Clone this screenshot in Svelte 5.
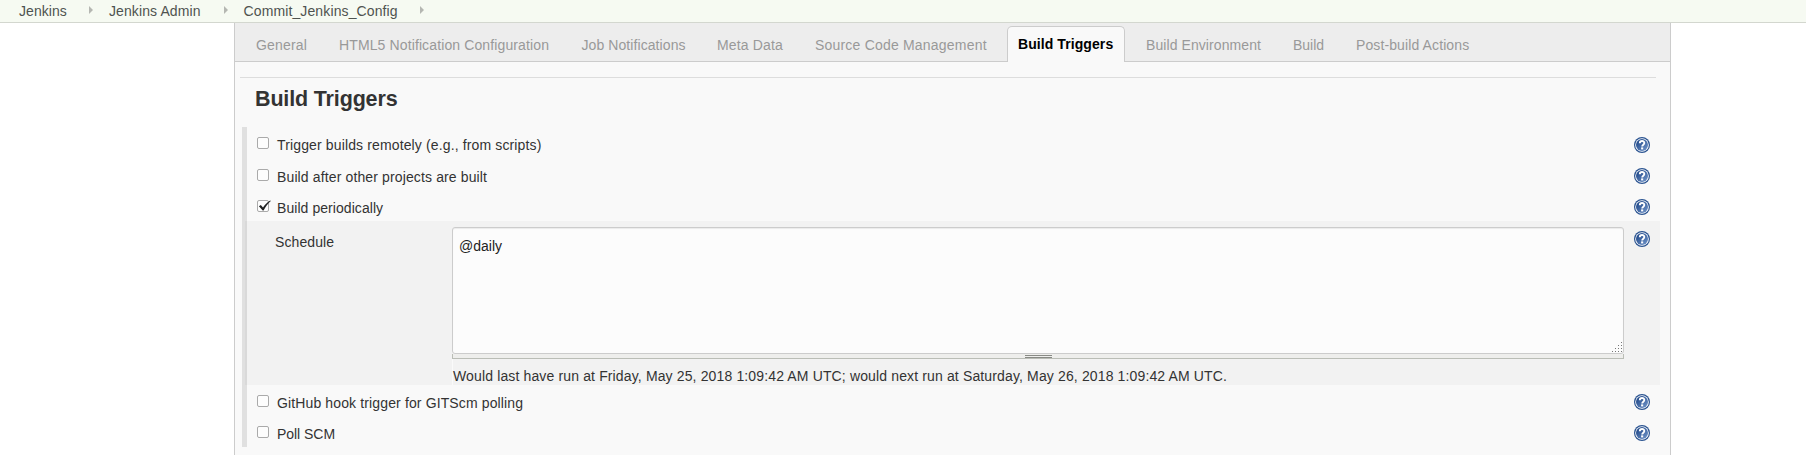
<script>
  // Each entry: text, advance width in px, letter spacing in px
  const crumbs = [
    ['Jenkins', 48, 0.06],
    ['Jenkins Admin', 92.5, 0.1],
    ['Commit_Jenkins_Config', 154.5, 0.12]
  ];
  const tabs = [
    ['General', 51, 0.17],
    ['HTML5 Notification Configuration', 210.5, 0.12],
    ['Job Notifications', 103.5, 0.08],
    ['Meta Data', 66, 0.16],
    ['Source Code Management', 172, 0.2],
    ['Build Triggers', 96, 0.08],
    ['Build Environment', 115, 0.08],
    ['Build', 31, 0],
    ['Post-build Actions', 114, 0.11]
  ];
  let active = $state('Build Triggers');
  let schedule = $state('@daily');
</script>

{#snippet help()}
  <svg class="help" width="16" height="16" viewBox="0 0 16 16" role="img" aria-label="Help">
    <defs>
      <linearGradient id="help-fill" x1="0" y1="0" x2="1" y2="1">
        <stop offset="0.2" stop-color="#274f8f" />
        <stop offset="1" stop-color="#7699cc" />
      </linearGradient>
    </defs>
    <circle cx="8" cy="8" r="8" fill="#2a5390" />
    <circle cx="8" cy="8" r="6.8" fill="#fff" />
    <circle cx="8" cy="8" r="6" fill="url(#help-fill)" />
    <path d="M5.8 6.2C5.8 3.3 10.3 3.4 10.3 6C10.3 7.7 8.2 7.6 8.2 9.5" fill="none" stroke="#fff" stroke-width="1.9" />
    <rect x="7.1" y="10.4" width="2.1" height="2" fill="#fff" />
  </svg>
{/snippet}

{#snippet option(label, spacing, checked)}
  <div class="option">
    <span class="box">
      {#if checked}
        <svg width="14" height="13" viewBox="0 0 14 13">
          <path d="M0.9 6.3L2.8 5L5 7.4C6.8 4.6 9 2.2 12.2 0.4L12.8 1C9.9 3.6 7.6 6.6 5.6 10.4H4.7Z" transform="translate(0 -1)" fill="#1f2122" />
        </svg>
      {/if}
    </span>
    <span class="label" style:letter-spacing="{spacing}px">{label}</span>
    {@render help()}
  </div>
{/snippet}

<nav class="crumbs">
  {#each crumbs as [crumb, width, spacing]}
    <span class="crumb" style:width="{width}px" style:letter-spacing="{spacing}px">{crumb}</span>
    <svg class="arrow" width="4" height="8" viewBox="0 0 4 8"><path d="M0 0L4 4L0 8Z" fill="#b5b7b2" /></svg>
  {/each}
</nav>

<main class="panel">
  <div class="tabs">
    {#each tabs as [tab, width, spacing]}
      <button class="tab" class:active={tab === active} onclick={() => (active = tab)}>
        <span style:width="{width}px" style:letter-spacing="{spacing}px">{tab}</span>
      </button>
    {/each}
  </div>
  <hr />
  <h2>Build Triggers</h2>
  <section class="triggers">
    {@render option('Trigger builds remotely (e.g., from scripts)', 0.135, false)}
    {@render option('Build after other projects are built', 0.13, false)}
    {@render option('Build periodically', 0.06, true)}
    <div class="schedule">
      <span class="name">Schedule</span>
      <div class="field">
        <textarea bind:value={schedule} spellcheck="false"></textarea>
        <svg class="grip" width="11" height="11" viewBox="0 0 11 11">
          <path
            d="M9 0h1v1h-1zM6 3h1v1h-1zM9 3h1v1h-1zM3 6h1v1h-1zM6 6h1v1h-1zM9 6h1v1h-1zM0 9h1v1h-1zM3 9h1v1h-1zM6 9h1v1h-1zM9 9h1v1h-1z"
            fill="#777"
          />
        </svg>
        <div class="handle"><i></i></div>
        <p>Would last have run at Friday, May 25, 2018 1:09:42 AM UTC; would next run at Saturday, May 26, 2018 1:09:42 AM UTC.</p>
      </div>
      {@render help()}
    </div>
    {@render option('GitHub hook trigger for GITScm polling', 0.13, false)}
    {@render option('Poll SCM', -0.04, false)}
  </section>
</main>

<style>
  :global(body) {
    background: #fff;
    color: #333;
    font: 14px/18px 'Liberation Sans', Arial, sans-serif;
    overflow: hidden;
  }

  .crumbs {
    box-sizing: border-box;
    height: 23px;
    padding-left: 19px;
    display: flex;
    align-items: center;
    background: #f6faf2;
    border-bottom: 1px solid #d3d7cf;
    color: #4f5350;
  }
  .crumb {
    line-height: 22px;
    white-space: nowrap;
  }
  .arrow {
    flex: none;
    margin: 0 16px 3px 22px;
  }

  .panel {
    box-sizing: border-box;
    width: 1437px;
    height: 432px;
    margin-left: 234px;
    border: 1px solid #ccc;
    border-width: 0 1px;
    background: #f9f9f9;
  }
  .tabs {
    box-sizing: border-box;
    height: 39px;
    padding: 3px 0 0 5px;
    display: flex;
    background: #ededed;
    border-bottom: 1px solid #ccc;
  }
  .tab {
    box-sizing: border-box;
    height: 36px;
    padding: 1px 16px 0;
    border: 0;
    background: none;
    color: #999;
    font: inherit;
    text-align: left;
    white-space: nowrap;
  }
  .tab span {
    display: block;
  }
  .tab.active {
    margin: 0 5px 0 4px;
    padding: 0 10px 2px;
    border: 1px solid #ccc;
    border-bottom: 0;
    border-radius: 5px 5px 0 0;
    background: #f9f9f9;
    color: #000;
    font-weight: bold;
  }

  hr {
    height: 1px;
    margin: 15px 14px 0 5px;
    border: 0;
    background: #ddd;
  }
  h2 {
    margin: 8px 0 0 20px;
    font-size: 21.5px;
    line-height: 26px;
    letter-spacing: -0.15px;
  }

  .triggers {
    margin: 15px 10px 0 7px;
    border-left: 5px solid #e0e0e0;
    height: 320px;
  }
  .option {
    height: 31px;
    padding: 10px 10px 0;
    box-sizing: border-box;
    display: flex;
    align-items: flex-start;
  }
  .option:first-child {
    height: 32px;
  }
  .box {
    box-sizing: border-box;
    width: 12px;
    height: 12px;
    border: 1px solid #aaa;
    border-radius: 2px;
    background: #fdfdfd;
  }
  .box svg {
    display: block;
    overflow: visible;
  }
  .label {
    flex: 1;
    margin: -1px 0 0 8px;
  }
  .help {
    display: block;
    flex: none;
  }
  .option:not(:first-child) .help {
    margin-top: -1px;
  }
  .schedule {
    box-sizing: border-box;
    height: 164px;
    margin-left: -2px;
    padding: 6px 10px 0 30px;
    display: flex;
    background: linear-gradient(90deg, #d9d9d9 2px, #f2f2f2 2px);
  }
  .name {
    width: 177px;
    padding-top: 6px;
    letter-spacing: 0.1px;
  }
  .field {
    position: relative;
    width: 1172px;
    margin-right: 10px;
  }
  .schedule .help {
    margin-top: 4px;
  }
  textarea {
    box-sizing: border-box;
    display: block;
    width: 1172px;
    height: 127px;
    margin: 0;
    padding: 9px 6px;
    border: 1px solid #ccc;
    border-radius: 3px;
    background: #fcfcfc;
    box-shadow: inset 0 1px 1px rgba(0, 0, 0, 0.07);
    color: #222;
    font: inherit;
    resize: none;
    outline: none;
  }
  .grip {
    position: absolute;
    right: 1px;
    top: 115px;
  }
  .handle {
    box-sizing: border-box;
    height: 5px;
    padding-top: 1px;
    border: 1px solid #babdb6;
    border-top: 0;
    background: #eeeeec;
  }
  .handle i {
    display: block;
    box-sizing: border-box;
    width: 27px;
    height: 3px;
    margin: 0 auto;
    border: 1px solid #888a85;
    border-width: 1px 0;
  }
  p {
    margin: 0;
    padding-top: 8px;
    border-left: 1px solid #fafafa;
    letter-spacing: 0.139px;
    white-space: nowrap;
  }
</style>
